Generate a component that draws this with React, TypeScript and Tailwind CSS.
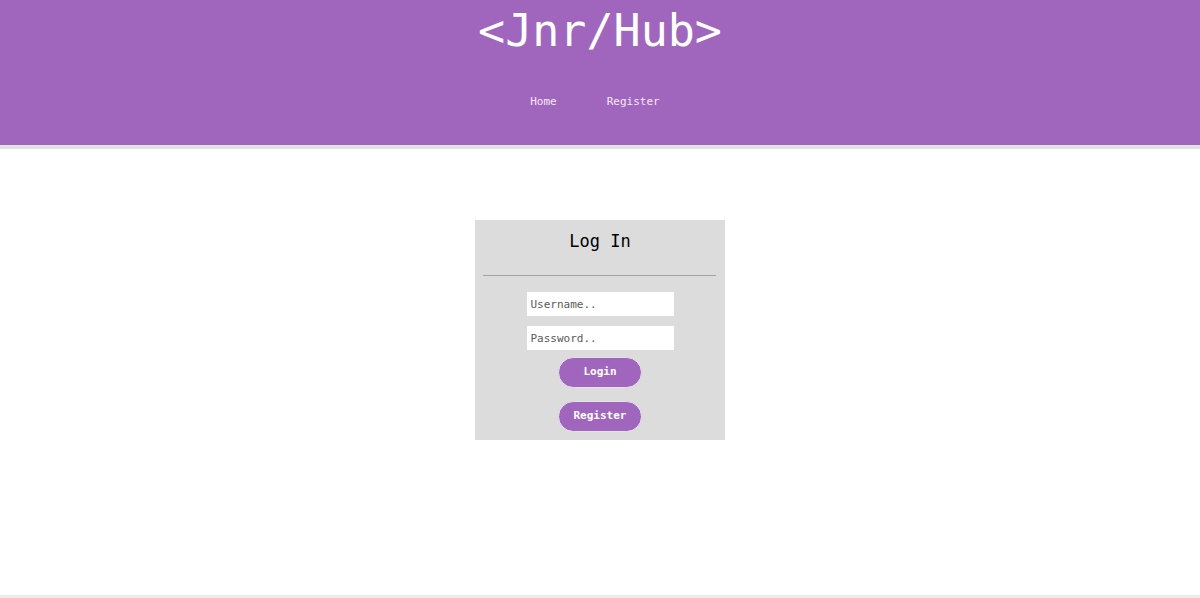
import React from "react";

export default function App() {
  const mono = { fontFamily: '"DejaVu Sans Mono", monospace' };
  return (
    <div className="w-[1200px] h-[598px] bg-white flex flex-col overflow-hidden" style={mono}>
      <header className="h-[149px] bg-[#a066be] border-b-4 border-[#e2e2e2] flex flex-col items-center">
        <h1 className="text-[45px] leading-none text-white mt-[8px]">&lt;Jnr/Hub&gt;</h1>
        <nav className="flex gap-[50px] mt-[41px] pr-[10px] text-[11px] text-[#f3e9f7]">
          <span>Home</span>
          <span>Register</span>
        </nav>
      </header>
      <main className="flex-1 flex justify-center pt-[71px]">
        <div className="w-[250px] h-[220px] bg-[#dcdcdc] flex flex-col items-center">
          <h2 className="text-[17px] leading-none text-black mt-[13px]">Log In</h2>
          <div className="w-[233px] h-px bg-[#a3a3a3] mt-[25px] -ml-[2px]" />
          <input
            className="mt-[16px] w-[147px] h-[24px] bg-white px-[4px] text-[11px] text-[#5a5a5a] placeholder:text-[#5a5a5a] outline-none"
            placeholder="Username.."
            style={mono}
          />
          <input
            className="mt-[10px] w-[147px] h-[24px] bg-white px-[4px] text-[11px] text-[#5a5a5a] placeholder:text-[#5a5a5a] outline-none"
            placeholder="Password.."
            style={mono}
          />
          <button
            className="mt-[7px] w-[84px] h-[31px] rounded-full bg-[#a066be] border border-[#e8e0ec] text-white text-[11px] font-bold"
            style={mono}
          >
            Login
          </button>
          <button
            className="mt-[13px] w-[84px] h-[31px] rounded-full bg-[#a066be] border border-[#e8e0ec] text-white text-[11px] font-bold"
            style={mono}
          >
            Register
          </button>
        </div>
      </main>
      <div className="h-[3px] bg-[#ececec]" />
    </div>
  );
}
